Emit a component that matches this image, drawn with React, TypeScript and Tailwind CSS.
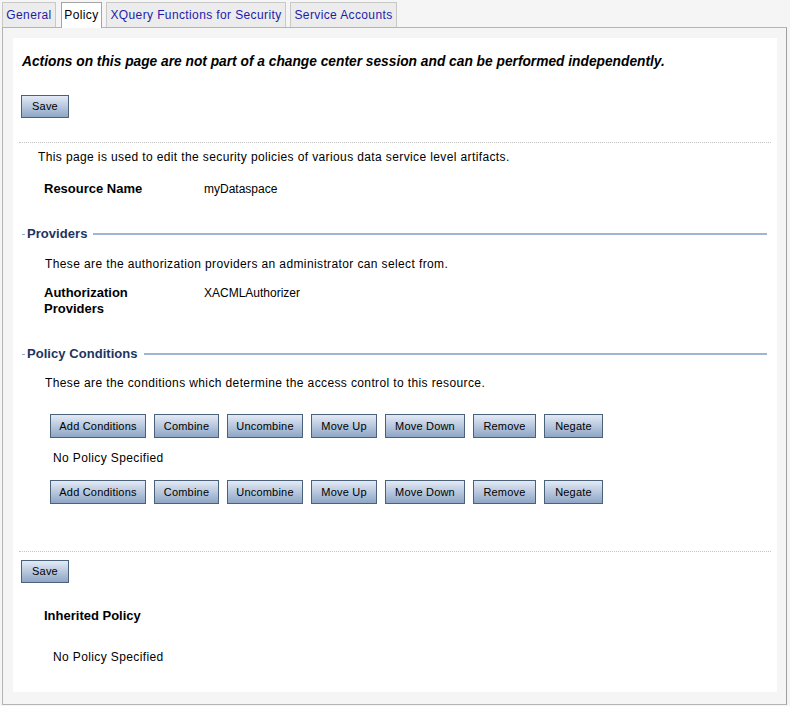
const tabs = [
  { label: "General", width: "w-[54px]", gap: "" },
  { label: "Policy", width: "w-[41px]", gap: "ml-[5px]", active: true },
  { label: "XQuery Functions for Security", width: "w-[180px]", gap: "ml-[4px]" },
  { label: "Service Accounts", width: "w-[107px]", gap: "ml-[4px]" },
];

const conditionButtons = [
  { label: "Add Conditions", width: "w-[96px]" },
  { label: "Combine", width: "w-[65px]" },
  { label: "Uncombine", width: "w-[76px]" },
  { label: "Move Up", width: "w-[66px]" },
  { label: "Move Down", width: "w-[80px]" },
  { label: "Remove", width: "w-[63px]" },
  { label: "Negate", width: "w-[59px]" },
];

function ConsoleButton({
  label,
  width,
  height = "h-[24px]",
}: {
  label: string;
  width: string;
  height?: string;
}) {
  return (
    <button
      className={`${width} ${height} shrink-0 border border-[#4b6079] bg-gradient-to-b from-[#e3eaf6] to-[#8ea6c5] text-[11px] leading-none tracking-[0.2px] text-black`}
    >
      {label}
    </button>
  );
}

function SectionTitle({ title }: { title: string }) {
  return (
    <div className="ml-[9px] mr-[10px] flex h-[18px] items-center">
      <span className="h-px w-[3px] bg-[#8fa6c4]" />
      <span className="ml-[2px] text-[13px] font-bold leading-[18px] tracking-[0.05px] text-[#1d3461]">
        {title}
      </span>
      <span className="ml-[6px] h-[2px] flex-1 bg-[#9fb6d2]" />
    </div>
  );
}

function ButtonRow({ className }: { className: string }) {
  return (
    <div className={`ml-[37px] flex gap-[8px] ${className}`}>
      {conditionButtons.map((b) => (
        <ConsoleButton key={b.label} label={b.label} width={b.width} />
      ))}
    </div>
  );
}

export default function App() {
  return (
    <div className="h-[706px] w-[790px] overflow-hidden bg-[#f5f5f5] pl-[2px] pr-[3px] pt-[2px] font-['Liberation_Sans',Arial,sans-serif] text-[12px] tracking-[0.38px] text-black">
      <div className="relative z-10 flex">
        {tabs.map((t) => (
          <div
            key={t.label}
            className={`${t.width} ${t.gap} shrink-0 border border-b-0 text-center text-[12px] leading-[24px] ${
              t.active
                ? "h-[26px] border-[#a4a4a4] bg-white text-black"
                : "h-[25px] border-[#c8c8c8] bg-[#ececec] text-[#1c1ca8]"
            }`}
          >
            {t.label}
          </div>
        ))}
      </div>

      <div className="-mt-px border border-[#b4b4b4] border-r-[#a0a0a0] bg-[#f5f5f5] pb-[12px] pl-[10px] pr-[9px] pt-[10px]">
        <div className="bg-white pb-[27px] pt-[16px]">
          <p className="ml-[9px] text-[13.75px] font-bold italic leading-[16px] tracking-normal">
            Actions on this page are not part of a change center session and can
            be performed independently.
          </p>

          <div className="ml-[8px] mt-[25px]">
            <ConsoleButton label="Save" width="w-[48px]" height="h-[23px]" />
          </div>

          <div className="mx-[6px] mt-[24px] border-t border-dotted border-[#c4c4c4]" />

          <p className="ml-[25px] mt-[6px] leading-[16px]">
            This page is used to edit the security policies of various data
            service level artifacts.
          </p>

          <div className="ml-[31px] mt-[16px] flex leading-[16px]">
            <span className="w-[160px] text-[13px] font-bold tracking-normal">
              Resource Name
            </span>
            <span className="tracking-normal">myDataspace</span>
          </div>

          <div className="mt-[28px]">
            <SectionTitle title="Providers" />
          </div>

          <p className="ml-[32px] mt-[13px] leading-[16px]">
            These are the authorization providers an administrator can select
            from.
          </p>

          <div className="ml-[31px] mt-[13px] flex leading-[16px]">
            <span className="w-[160px] text-[13px] font-bold tracking-normal">
              Authorization
              <br />
              Providers
            </span>
            <span className="tracking-normal">XACMLAuthorizer</span>
          </div>

          <div className="mt-[28px]">
            <SectionTitle title="Policy Conditions" />
          </div>

          <p className="ml-[32px] mt-[12px] leading-[16px]">
            These are the conditions which determine the access control to this
            resource.
          </p>

          <ButtonRow className="mt-[23px]" />

          <p className="ml-[40px] mt-[12px] leading-[16px]">No Policy Specified</p>

          <ButtonRow className="mt-[14px]" />

          <div className="mx-[6px] mt-[47px] border-t border-dotted border-[#c4c4c4]" />

          <div className="ml-[8px] mt-[8px]">
            <ConsoleButton label="Save" width="w-[48px]" height="h-[23px]" />
          </div>

          <p className="ml-[31px] mt-[25px] text-[13px] font-bold leading-[16px] tracking-normal">
            Inherited Policy
          </p>

          <p className="ml-[40px] mt-[25px] leading-[16px]">No Policy Specified</p>
        </div>
      </div>
    </div>
  );
}
